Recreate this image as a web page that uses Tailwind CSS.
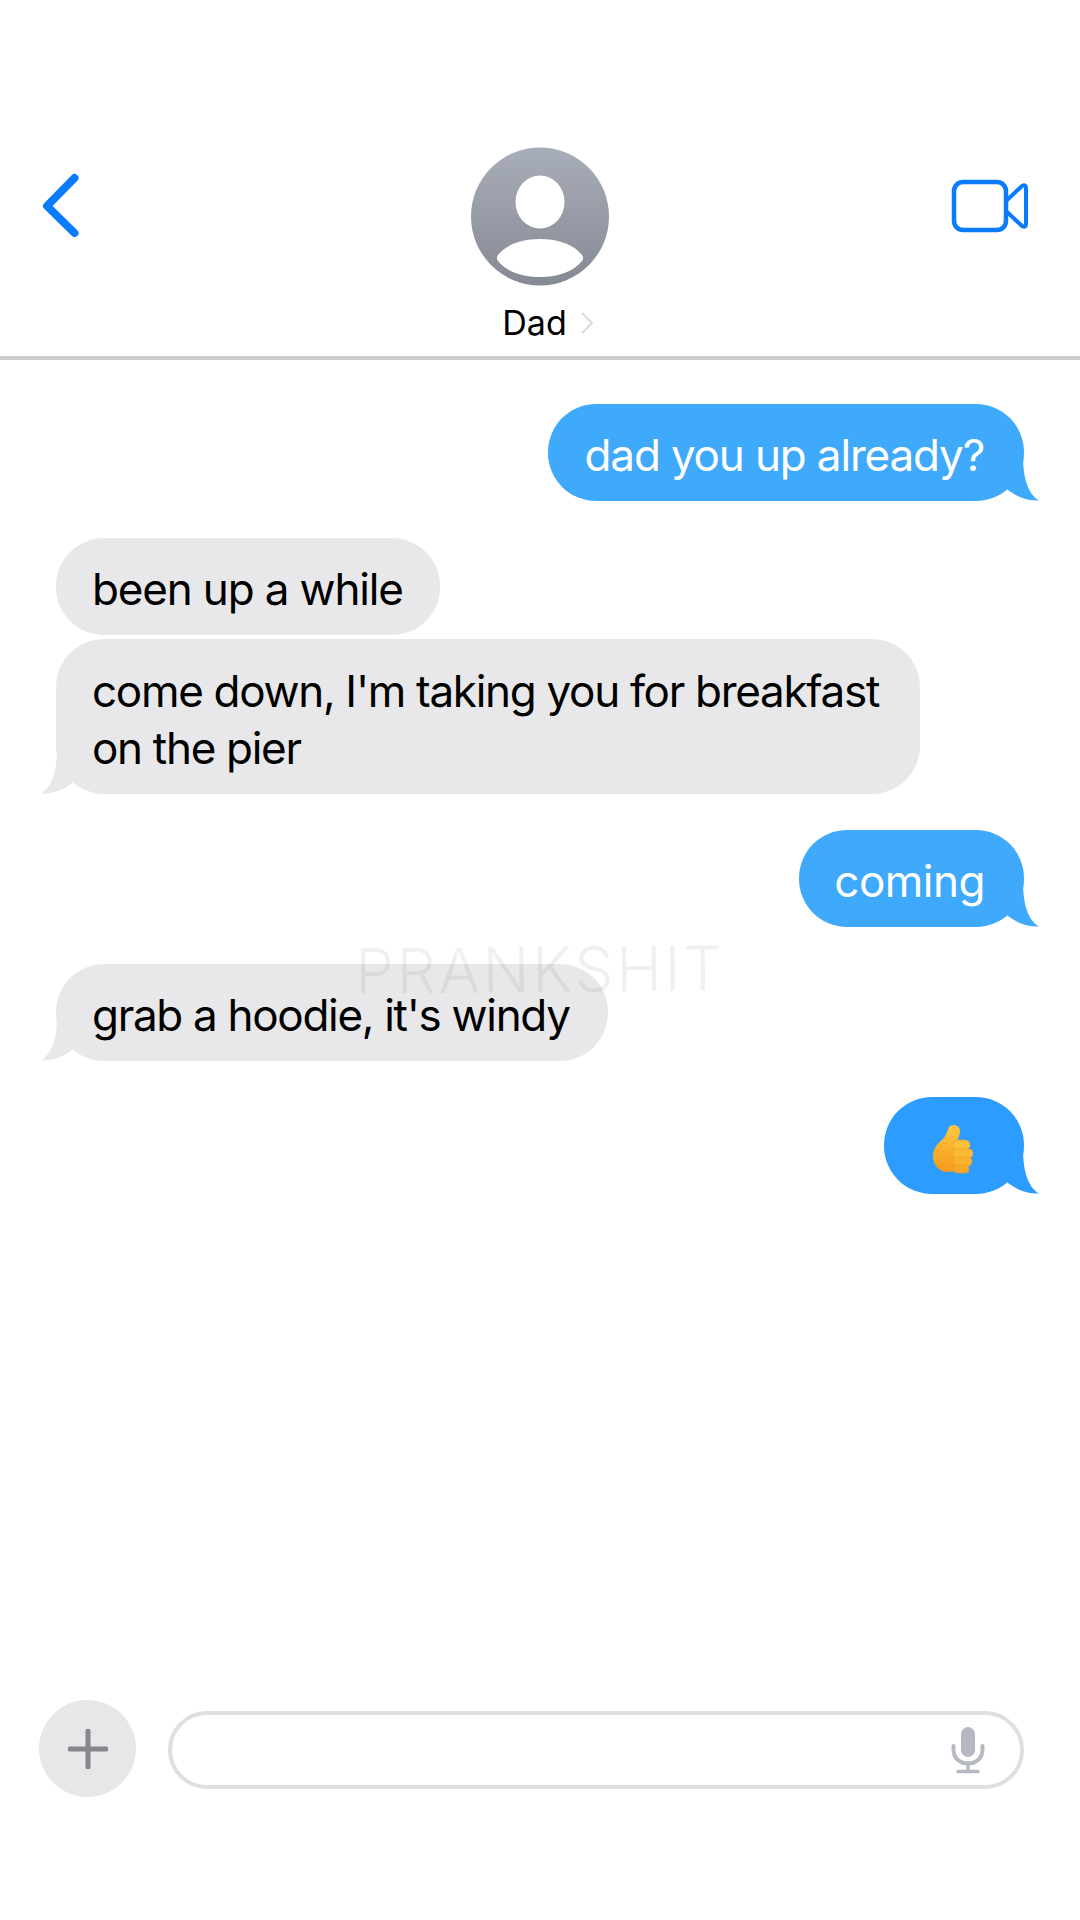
<!DOCTYPE html>
<html lang="en">
<head>
    <meta charset="UTF-8">
    <title>Messages</title>
    <script src="https://cdn.jsdelivr.net/npm/@tailwindcss/browser@4"></script>
</head>
<body class="bg-white">
<div class="relative flex flex-col w-[1080px] h-[1920px] overflow-hidden font-['Inter',sans-serif]">
    <!-- Header -->
    <header class="pt-[147px] h-[360px] border-b-4 border-[#cdcdcd] shrink-0">
        <div class="grid grid-cols-[1fr_auto_1fr] px-[40px]">
            <svg class="w-[44px] h-[70px] mt-[24px]" viewBox="0 0 44 70" fill="none">
                <path d="M34.500 7 L7 35 L34.500 62" stroke="#0a7aff" stroke-width="8" stroke-linecap="round" stroke-linejoin="round"/>
            </svg>
            <div class="flex flex-col items-center">
                <svg class="w-[138px] h-[139px]" viewBox="0 0 138 139">
                    <defs>
                        <linearGradient id="avatarFill" x1="0" y1="0" x2="0" y2="1">
                            <stop offset="0" stop-color="#a8aeb9"/>
                            <stop offset="1" stop-color="#858993"/>
                        </linearGradient>
                    </defs>
                    <circle cx="69" cy="69.500" r="69" fill="url(#avatarFill)"/>
                    <ellipse cx="69" cy="55" rx="24.500" ry="26.500" fill="#fff"/>
                    <path d="M27 108 C35 98 50 92 69 92 C88 92 103 98 111 108 C112.500 110 112.500 112 111 114 C103 124 88 130 69 130 C50 130 35 124 27 114 C25.500 112 25.500 110 27 108 Z" fill="#fff"/>
                </svg>
                <div class="flex items-center mt-[16px] ml-[16px]">
                    <span class="text-[34px] leading-[42px] text-black">Dad</span>
                    <svg class="w-[14px] h-[22px] ml-[13px]" viewBox="0 0 14 22" fill="none">
                        <path d="M2 1 L12 11 L2 21" stroke="#dcdcdc" stroke-width="2"/>
                    </svg>
                </div>
            </div>
            <svg class="justify-self-end w-[78px] h-[54px] mt-[32px] mr-[11px]" viewBox="0 0 78 54" fill="none">
                <rect x="3" y="3" width="52" height="48" rx="9" stroke="#0a7aff" stroke-width="4.500"/>
                <path d="M55 22 L71 7 Q75 5 75 9 L75 45 Q75 49 71 47 L55 32" stroke="#0a7aff" stroke-width="4" stroke-linejoin="round"/>
            </svg>
        </div>
    </header>

    <!-- Messages -->
    <main class="flex flex-col items-start px-[56px] pt-[44px] text-[44px] leading-[57px] tracking-[-1.15px]">
        <div class="relative self-end rounded-[48px] bg-[#3fa9fc] text-white pt-[23px] pb-[17px] pl-[37px] pr-[40px]">
            dad you up already?
            <svg class="absolute right-[-16px] bottom-0 w-[40px] h-[45px]" viewBox="0 0 40 45"><path d="M23 0 C23 22 28 38 39 44.500 C28 45 17 41 8 34 L0 20 Z" fill="#3fa9fc"/></svg>
        </div>
        <div class="mt-[37px] rounded-[48px] bg-[#e8e8ea] text-black pt-[23px] pb-[17px] pl-[36px] pr-[37px]">been up a while</div>
        <div class="relative mt-[4px] w-[864px] rounded-[48px] bg-[#e8e8ea] text-black tracking-[-1.3px] pt-[24px] pb-[17px] pl-[36px] pr-[24px]">
            come down, I'm taking you for breakfast on the pier
            <svg class="absolute left-[-16px] bottom-0 w-[40px] h-[45px] -scale-x-100" viewBox="0 0 40 45"><path d="M23 0 C23 22 28 38 39 44.500 C28 45 17 41 8 34 L0 20 Z" fill="#e8e8ea"/></svg>
        </div>
        <div class="relative self-end mt-[36px] rounded-[48px] bg-[#3fa9fc] text-white tracking-[-0.5px] pt-[23px] pb-[17px] pl-[35px] pr-[39px]">
            coming
            <svg class="absolute right-[-16px] bottom-0 w-[40px] h-[45px]" viewBox="0 0 40 45"><path d="M23 0 C23 22 28 38 39 44.500 C28 45 17 41 8 34 L0 20 Z" fill="#3fa9fc"/></svg>
        </div>
        <div class="relative mt-[37px] rounded-[48px] bg-[#e8e8ea] text-black tracking-[-1.3px] pt-[23px] pb-[17px] pl-[36px] pr-[38px]">
            grab a hoodie, it's windy
            <svg class="absolute left-[-16px] bottom-0 w-[40px] h-[45px] -scale-x-100" viewBox="0 0 40 45"><path d="M23 0 C23 22 28 38 39 44.500 C28 45 17 41 8 34 L0 20 Z" fill="#e8e8ea"/></svg>
        </div>
        <div class="relative self-end flex items-center justify-center mt-[36px] w-[140px] h-[97px] rounded-[48px] bg-[#2d9cff]">
            <svg class="w-[40px] h-[50px] mt-[6px] mr-[2px]" viewBox="0 0 40 50">
                <defs>
                    <linearGradient id="thumbFill" x1="0" y1="0" x2="0" y2="1">
                        <stop offset="0" stop-color="#fdc83f"/>
                        <stop offset="1" stop-color="#f59a1d"/>
                    </linearGradient>
                </defs>
                <path d="M16 3 C19 -1 27 1 27 7 C27 11 25 14 24 17 L24 47 L15 48 C6 48 0 41 0 32 C0 25 4 20 9 16 C12 14 14 8 16 3 Z" fill="url(#thumbFill)"/>
                <rect x="20" y="16" width="17" height="10" rx="5" fill="#fdc03a" stroke="#ee9a24" stroke-width="0.600"/>
                <rect x="20" y="25" width="20" height="9" rx="4.500" fill="#fdbb35" stroke="#ee9a24" stroke-width="0.600"/>
                <rect x="20" y="33" width="19" height="9" rx="4.500" fill="#fbb22f" stroke="#ee9a24" stroke-width="0.600"/>
                <rect x="21" y="41" width="15" height="8" rx="4" fill="#f8a829" stroke="#ee9a24" stroke-width="0.600"/>
            </svg>
            <svg class="absolute right-[-16px] bottom-0 w-[40px] h-[45px]" viewBox="0 0 40 45"><path d="M23 0 C23 22 28 38 39 44.500 C28 45 17 41 8 34 L0 20 Z" fill="#2d9cff"/></svg>
        </div>
    </main>

    <!-- Input bar -->
    <footer class="mt-auto flex items-center pl-[39px] pr-[56px] pb-[123px]">
        <div class="flex items-center justify-center w-[97px] h-[97px] rounded-full bg-[#e6e7e9] shrink-0">
            <svg class="w-[40px] h-[40px]" viewBox="0 0 40 40" fill="none">
                <path d="M20 2 V38 M2 20 H38" stroke="#85878c" stroke-width="5" stroke-linecap="round"/>
            </svg>
        </div>
        <div class="flex items-center justify-end grow h-[78px] ml-[32px] mt-[2px] rounded-full border-4 border-[#dedfe0] pr-[35px]">
            <svg class="w-[34px] h-[48px]" viewBox="0 0 34 48" fill="none">
                <rect x="10" y="1" width="14" height="30" rx="7" fill="#b5b9c2"/>
                <path d="M2.500 20 V24 C2.500 32 9 37.500 17 37.500 C25 37.500 31.500 32 31.500 24 V20" stroke="#b5b9c2" stroke-width="4" stroke-linecap="round"/>
                <path d="M17 37 V45 M7 45.500 H27" stroke="#b5b9c2" stroke-width="3.500" stroke-linecap="round"/>
            </svg>
        </div>
    </footer>

    <!-- Watermark -->
    <div class="absolute left-[355px] top-[932px] text-[62px] leading-[75px] font-light tracking-[2.500px] text-black/[0.06] -rotate-[0.5deg] pointer-events-none">PRANKSHIT</div>
</div>
</body>
</html>
